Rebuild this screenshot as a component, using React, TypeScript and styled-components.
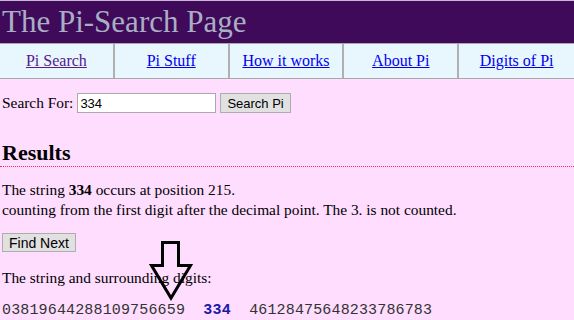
import styled, { createGlobalStyle } from "styled-components";

const GlobalStyle = createGlobalStyle`
  html, body {
    margin: 0;
    padding: 0;
    background: #ffddff;
  }
  body {
    font-family: "Liberation Serif", "Times New Roman", serif;
    font-size: 16px;
    color: #000;
  }
`;

const Page = styled.div`
  position: relative;
  width: 574px;
  height: 320px;
  overflow: hidden;
`;

const Header = styled.div`
  background: #3f0a5a;
  border-top: 1px solid #c9b7d4;
  height: 42px;
  padding-left: 2px;
  color: #a9afc3;
  font-size: 31px;
  line-height: 41px;
`;

const Nav = styled.div`
  display: grid;
  grid-template-columns: repeat(5, 1fr);
  background: #e8f6fe;
  border: 1px solid #a8a8a8;
  border-left: none;
  border-right: none;
  height: 34px;
`;

const NavCell = styled.div`
  display: flex;
  align-items: center;
  justify-content: center;
  border-right: 2px solid #b0b0b0;
  &:last-child {
    border-right: none;
  }
`;

const NavLink = styled.a<{ $visited?: boolean }>`
  color: ${(p) => (p.$visited ? "#551a8b" : "#0000ee")};
  text-decoration: underline;
  font-size: 16px;
  cursor: pointer;
`;

const Content = styled.div`
  padding: 0 2px;
`;

const SearchRow = styled.form`
  display: flex;
  align-items: center;
  gap: 4px;
  margin-top: 13px;
  height: 22px;
  font-size: 15.4px;
`;

const TextInput = styled.input`
  width: 133px;
  height: 16px;
  border: 1px solid #a9a9a9;
  padding: 1px 2px;
  font-family: "Liberation Sans", Arial, sans-serif;
  font-size: 13px;
  color: #000;
  background: #fff;
`;

const Button = styled.button<{ $wide?: boolean }>`
  background: #e1e1e1;
  border: 1px solid #adadad;
  font-family: "Liberation Sans", Arial, sans-serif;
  font-size: ${(p) => (p.$wide ? 14 : 13)}px;
  color: #000;
  height: ${(p) => (p.$wide ? 19 : 20)}px;
  padding: 0 6px;
  margin: 0;
`;

const Heading = styled.h2`
  margin: 26px -2px 0;
  padding-left: 2px;
  font-size: 22px;
  font-weight: bold;
  line-height: 26px;
  border-bottom: 1px dotted #f5304f;
`;

const Para = styled.p<{ $gap?: number }>`
  margin: ${(p) => p.$gap ?? 13}px 0 0;
  font-size: 15.4px;
  line-height: 20px;
`;

const ButtonRow = styled.div`
  margin-top: 13px;
  height: 21px;
  display: flex;
`;

const Digits = styled.div`
  margin-top: 13px;
  font-family: "Liberation Mono", "Courier New", monospace;
  font-size: 15px;
  letter-spacing: 0.15px;
  line-height: 20px;
  color: #333;
  white-space: pre;
`;

const Match = styled.b`
  color: #1a1aa6;
`;

const Arrow = styled.svg`
  position: absolute;
  left: 148px;
  top: 239px;
`;

const links = ["Pi Search", "Pi Stuff", "How it works", "About Pi", "Digits of Pi"];

export default function App() {
  return (
    <Page>
      <GlobalStyle />
      <Header>The Pi-Search Page</Header>
      <Nav>
        {links.map((l, i) => (
          <NavCell key={l}>
            <NavLink $visited={i === 0}>{l}</NavLink>
          </NavCell>
        ))}
      </Nav>
      <Content>
        <SearchRow onSubmit={(e) => e.preventDefault()}>
          <span>Search For:</span>
          <TextInput defaultValue="334" />
          <Button type="submit">Search Pi</Button>
        </SearchRow>
        <Heading>Results</Heading>
        <Para>
          The string <b>334</b> occurs at position 215.
          <br />
          counting from the first digit after the decimal point. The 3. is not counted.
        </Para>
        <ButtonRow>
          <Button $wide>Find Next</Button>
        </ButtonRow>
        <Para $gap={14}>The string and surrounding digits:</Para>
        <Digits>
          03819644288109756659{"  "}
          <Match>334</Match>
          {"  "}46128475648233786783
        </Digits>
      </Content>
      <Arrow width="46" height="64" viewBox="0 0 46 64">
        <path
          d="M14.5 3.5 H30.5 V26.5 H42.5 L23 59 L3.5 26.5 H14.5 Z"
          fill="none"
          stroke="#000"
          strokeWidth="3"
          strokeLinejoin="miter"
        />
      </Arrow>
    </Page>
  );
}
